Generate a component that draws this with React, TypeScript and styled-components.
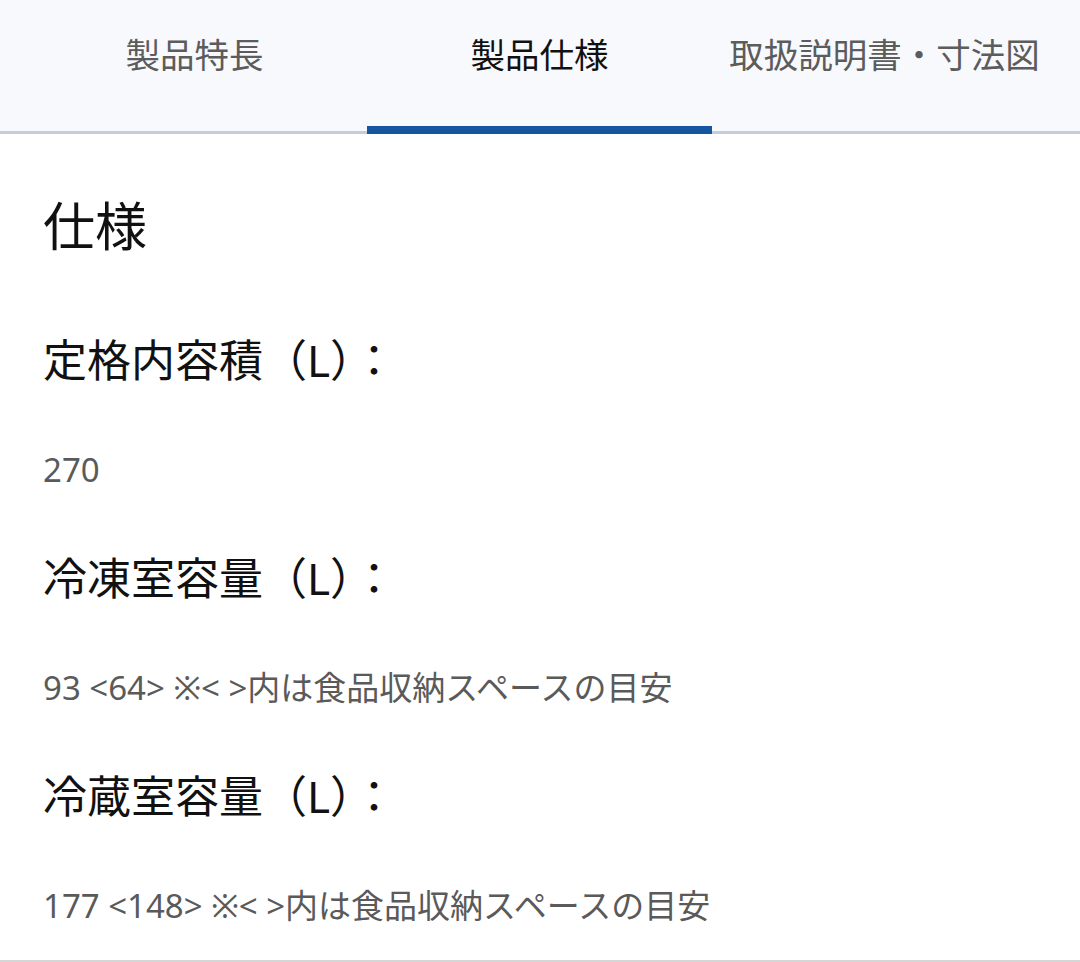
import React, { useState } from 'react';
import styled, { createGlobalStyle } from 'styled-components';

const GlobalStyle = createGlobalStyle`
	html, body {
		margin: 0;
		padding: 0;
		background: #ffffff;
	}
	body {
		font-family: 'Noto Sans', 'Noto Sans CJK JP', sans-serif;
		color: #111111;
	}
`;

interface SpecItem {
	label: string;
	value: string;
}

const TABS = ['製品特長', '製品仕様', '取扱説明書・寸法図'];

const SPECS: SpecItem[] = [
	{ label: '定格内容積（L）：', value: '270' },
	{ label: '冷凍室容量（L）：', value: '93 <64> ※< >内は食品収納スペースの目安' },
	{ label: '冷蔵室容量（L）：', value: '177 <148> ※< >内は食品収納スペースの目安' },
];

const App: React.FC = () => {
	const [active, setActive] = useState(1);

	return (
		<>
			<GlobalStyle />
			<Page>
				<TabBar>
					{TABS.map((tab, i) => (
						<Tab key={tab} active={i === active} onClick={() => setActive(i)}>
							{tab}
						</Tab>
					))}
				</TabBar>
				<Content>
					<Title>仕様</Title>
					<SpecList>
						{SPECS.map((spec) => (
							<SpecRow key={spec.label}>
								<SpecLabel>{spec.label}</SpecLabel>
								<SpecValue>{spec.value}</SpecValue>
							</SpecRow>
						))}
					</SpecList>
				</Content>
			</Page>
		</>
	);
};

const Page = styled.div`
	width: 1080px;
	background: #ffffff;
`;

const TabBar = styled.nav`
	display: flex;
	height: 131px;
	padding: 0 23px 0 22px;
	background: #f7f9fc;
	border-bottom: 3px solid #c4ced9;
`;

const Tab = styled.button<{ active: boolean }>`
	flex: 0 0 345px;
	display: flex;
	align-items: center;
	justify-content: center;
	padding: 0 0 21px;
	margin-bottom: -3px;
	background: transparent;
	border: none;
	border-bottom: 8px solid ${({ active }) => (active ? '#1656a0' : 'transparent')};
	font-family: 'Noto Sans', 'Noto Sans CJK JP', sans-serif;
	font-size: 34.5px;
	color: ${({ active }) => (active ? '#111111' : '#5c5c5c')};
	white-space: nowrap;
	cursor: pointer;
`;

const Content = styled.section`
	padding: 56px 43px 0;
	border-bottom: 2px solid #d6d6d6;
`;

const Title = styled.h2`
	margin: 0 0 66px;
	font-size: 52px;
	line-height: 72px;
	font-weight: 400;
	color: #111111;
`;

const SpecList = styled.dl`
	margin: 0;
`;

const SpecRow = styled.div`
	margin-bottom: 52px;

	&:last-child {
		margin-bottom: 30px;
	}
`;

const SpecLabel = styled.dt`
	margin: 0 0 54px;
	font-size: 44px;
	line-height: 64px;
	font-weight: 400;
	color: #111111;
`;

const SpecValue = styled.dd`
	margin: 0;
	font-size: 33px;
	line-height: 48px;
	color: #5a5a5a;
`;

export default App;
